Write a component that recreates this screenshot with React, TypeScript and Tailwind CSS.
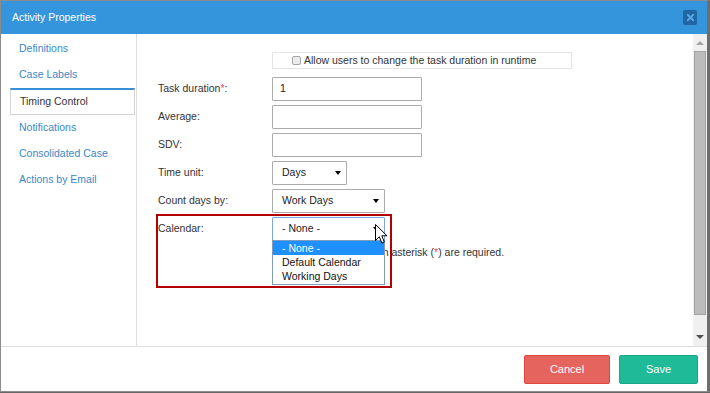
import { X } from 'lucide-react'

const TABS = ['Definitions', 'Case Labels', 'Timing Control', 'Notifications', 'Consolidated Case', 'Actions by Email']

const Caret = () => <span className="w-0 h-0 border-l-[3px] border-r-[3px] border-t-[4px] border-l-transparent border-r-transparent border-t-black" />

const Label = ({ text, req }: { text: string; req?: boolean }) => (
  <div className="w-[114px] pt-[5px] leading-[13px] text-[#333]">
    {text}
    {req && <span className="text-[#e8506a]">*</span>}:
  </div>
)

const App = () => {
  return (
    <div className="w-[710px] h-[393px] bg-[#666] font-['Liberation_Sans',Arial,sans-serif] text-[10.5px]">
      <div className="w-[710px] h-[392px] flex flex-col bg-white border-l border-t border-[#8c8c8c] border-r-[3px] border-r-[#6e6e6e] border-b border-b-[#8c8c8c]">
        {/* header */}
        <div className="h-[33px] shrink-0 bg-[#3595dc] flex items-center justify-between pl-[11px] pr-[10px]">
          <span className="text-white text-[10.5px] pt-[1px]">Activity Properties</span>
          <div className="w-[14px] h-[15px] bg-[#1f66a2] rounded-[2px] flex items-center justify-center">
            <X className="w-[11px] h-[11px] text-[#5aa9e6]" strokeWidth={4} />
          </div>
        </div>

        {/* body */}
        <div className="flex-1 flex min-h-0">
          <div className="w-[136px] border-r border-[#dedede] pt-[2px]">
            {TABS.map(t =>
              t === 'Timing Control' ? (
                <div
                  key={t}
                  className="ml-[9px] w-[125px] h-[27px] flex items-center pl-[9px] border border-[#d4d4d4] border-t-2 border-t-[#3a8fd6] text-[#333]"
                >
                  {t}
                </div>
              ) : (
                <div key={t} className="h-[26px] flex items-center pl-[18px] text-[#3b87c7]">
                  {t}
                </div>
              )
            )}
          </div>

          {/* content */}
          <div className="flex-1 relative pl-[21px] pt-[18px]">
            <div className="ml-[114px] w-[300px] h-[17px] border border-[#e4e4e4] flex items-center pl-[19px] text-[#333]">
              <span className="w-[9px] h-[9px] border border-[#a6a6a6] bg-[#ececec] rounded-[2px] mr-[3px]" />
              Allow users to change the task duration in runtime
            </div>

            <div className="flex mt-[8px]">
              <Label text="Task duration" req />
              <div className="w-[150px] h-[24px] border border-[#ababab] rounded-[1px] flex items-center pl-[7px] text-[#222]">1</div>
            </div>
            <div className="flex mt-[4px]">
              <Label text="Average" />
              <div className="w-[150px] h-[24px] border border-[#ababab] rounded-[1px]" />
            </div>
            <div className="flex mt-[4px]">
              <Label text="SDV" />
              <div className="w-[150px] h-[24px] border border-[#ababab] rounded-[1px]" />
            </div>
            <div className="flex mt-[4px]">
              <Label text="Time unit" />
              <div className="w-[75px] h-[24px] border border-[#ababab] rounded-[1px] flex items-center justify-between pl-[9px] pr-[5px] text-[#222]">
                Days
                <Caret />
              </div>
            </div>
            <div className="flex mt-[4px]">
              <Label text="Count days by" />
              <div className="w-[113px] h-[24px] border border-[#ababab] rounded-[1px] flex items-center justify-between pl-[9px] pr-[5px] text-[#222]">
                Work Days
                <Caret />
              </div>
            </div>
            <div className="flex mt-[4px]">
              <Label text="Calendar" />
              <div className="relative w-[113px] h-[24px] border border-[#7ea6dc] rounded-[1px] flex items-center justify-between pl-[9px] pr-[5px] text-[#222]">
                - None -
                <Caret />
                <div className="absolute left-[-1px] top-[22px] w-[113px] border border-[#7f9db9] bg-white pb-[1px] text-[#111] z-10">
                  <div className="h-[14px] leading-[14px] pl-[9px] bg-[#1e90ff] text-white">- None -</div>
                  <div className="h-[14px] leading-[14px] pl-[9px]">Default Calendar</div>
                  <div className="h-[14px] leading-[14px] pl-[9px]">Working Days</div>
                </div>
              </div>
            </div>
            <div className="mt-[5px] ml-[143px] leading-[13px] text-[#333]">
              Fields marked with asterisk (<span className="text-[#e8506a]">*</span>) are required.
            </div>

            {/* highlight */}
            <div className="absolute left-[19px] top-[180px] w-[236px] h-[74px] border-2 border-[#b30000] z-20" />

            {/* cursor */}
            <svg className="absolute left-[238px] top-[190px] z-30" width="13" height="21" viewBox="0 0 13 21">
              <path d="M0.5 0.5 L0.5 16.5 L4.3 12.8 L6.8 19 L9.3 18 L6.8 11.8 L12 11.8 Z" fill="white" stroke="black" strokeWidth="1" strokeLinejoin="round" />
            </svg>
          </div>

          {/* scrollbar */}
          <div className="w-[14px] bg-[#f0f0f0] flex flex-col items-center">
            <div className="h-[16px] flex items-center justify-center pt-[2px]">
              <span className="w-0 h-0 border-l-[4px] border-r-[4px] border-b-[4px] border-l-transparent border-r-transparent border-b-[#a3a3a3]" />
            </div>
            <div className="mt-[1px] w-[12px] h-[264px] bg-[#bcbcbc] border border-[#a2a2a2]" />
            <div className="flex-1 flex items-end justify-center pb-[7px]">
              <span className="w-0 h-0 border-l-[4px] border-r-[4px] border-t-[4px] border-l-transparent border-r-transparent border-t-[#505050]" />
            </div>
          </div>
        </div>

        {/* footer */}
        <div className="h-[45px] shrink-0 border-t border-[#dedede] flex items-center justify-end gap-[9px] pr-[9px]">
          <button className="w-[86px] h-[29px] bg-[#e5645d] border border-[#e0463d] rounded-[2px] text-white text-[11px]">Cancel</button>
          <button className="w-[79px] h-[29px] bg-[#1fbb98] border border-[#18a787] rounded-[2px] text-white text-[11px]">Save</button>
        </div>
      </div>
    </div>
  )
}

export default App
